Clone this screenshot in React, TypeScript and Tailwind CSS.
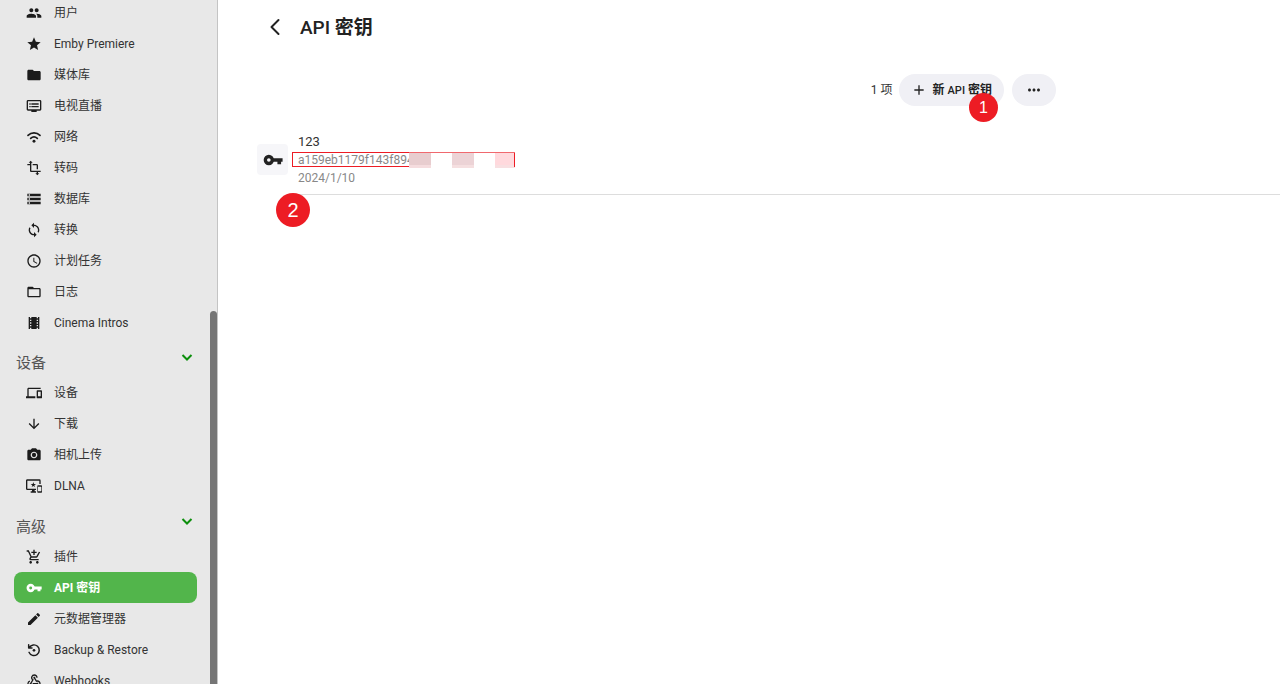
import type { ComponentType } from "react";
import {
  MdAccessTime,
  MdAdd,
  MdAddShoppingCart,
  MdArrowDownward,
  MdDevices,
  MdDvr,
  MdEdit,
  MdFolder,
  MdFolderOpen,
  MdImportantDevices,
  MdMoreHoriz,
  MdPeople,
  MdPhotoCamera,
  MdStar,
  MdStorage,
  MdSync,
  MdTheaters,
  MdTransform,
  MdWebhook,
} from "react-icons/md";

type IconProps = { className?: string };
type NavItem = { icon: ComponentType<IconProps>; label: string };

function WifiIcon({ className }: IconProps) {
  return (
    <svg viewBox="0 0 24 24" className={className} fill="none" stroke="currentColor" strokeWidth="2.6" strokeLinecap="round">
      <path d="M3 9.500c5-4.700 13-4.700 18 0M7 14c3-2.700 7-2.700 10 0" />
      <circle cx="12" cy="18.500" r="2.200" fill="currentColor" stroke="none" />
    </svg>
  );
}

function RestoreIcon({ className }: IconProps) {
  return (
    <svg viewBox="0 0 24 24" className={className} fill="none" stroke="currentColor" strokeWidth="2.2" strokeLinecap="round" strokeLinejoin="round">
      <path d="M4.500 15.500A8 8 0 1 0 5 8.200M4 4v5h5" />
      <circle cx="12" cy="12.500" r="2" fill="currentColor" stroke="none" />
    </svg>
  );
}

function KeyIcon({ className }: IconProps) {
  return (
    <svg viewBox="0 0 24 24" className={className} fill="none" stroke="currentColor">
      <circle cx="7" cy="12" r="4.200" strokeWidth="4" />
      <path d="M12 12h11.500M19.500 12v5" strokeWidth="4.400" />
    </svg>
  );
}

const serverItems: NavItem[] = [
  { icon: MdPeople, label: "用户" },
  { icon: MdStar, label: "Emby Premiere" },
  { icon: MdFolder, label: "媒体库" },
  { icon: MdDvr, label: "电视直播" },
  { icon: WifiIcon, label: "网络" },
  { icon: MdTransform, label: "转码" },
  { icon: MdStorage, label: "数据库" },
  { icon: MdSync, label: "转换" },
  { icon: MdAccessTime, label: "计划任务" },
  { icon: MdFolderOpen, label: "日志" },
  { icon: MdTheaters, label: "Cinema Intros" },
];

const deviceItems: NavItem[] = [
  { icon: MdDevices, label: "设备" },
  { icon: MdArrowDownward, label: "下载" },
  { icon: MdPhotoCamera, label: "相机上传" },
  { icon: MdImportantDevices, label: "DLNA" },
];

const advancedItems: NavItem[] = [
  { icon: MdAddShoppingCart, label: "插件" },
  { icon: KeyIcon, label: "API 密钥" },
  { icon: MdEdit, label: "元数据管理器" },
  { icon: RestoreIcon, label: "Backup & Restore" },
  { icon: MdWebhook, label: "Webhooks" },
];

function NavList({ items, active }: { items: NavItem[]; active?: string }) {
  return (
    <ul>
      {items.map((item) => {
        const isActive = item.label === active;
        return (
          <li key={item.label}>
            <a
              href="#"
              aria-current={isActive ? "page" : undefined}
              className={`flex h-[31px] items-center gap-3 rounded-lg pl-3 text-xs ${
                isActive ? "bg-[#52b54b] font-bold text-white" : "text-[#333]"
              }`}
            >
              <item.icon className={`size-4 shrink-0 ${isActive ? "" : "text-[#1c1c1c]"}`} />
              <span>{item.label}</span>
            </a>
          </li>
        );
      })}
    </ul>
  );
}

function NavSection({ title, items, active }: { title: string; items: NavItem[]; active?: string }) {
  return (
    <section className="pt-1">
      <button type="button" className="flex h-8 w-full items-center justify-between pr-1 pl-[2px]">
        <h2 className="pt-3 text-[15px] leading-5 text-[#555]">{title}</h2>
        <svg viewBox="0 0 12 12" className="size-3 text-[#0c8f0c]" fill="none" stroke="currentColor" strokeWidth="2">
          <path d="M1.500 4 6 8.500 10.500 4" />
        </svg>
      </button>
      <div className="pt-1">
        <NavList items={items} active={active} />
      </div>
    </section>
  );
}

export default function App() {
  return (
    <div className="flex h-screen overflow-hidden bg-white font-[Roboto,'Noto_Sans_CJK_SC',sans-serif] text-[#222]">
      {/* Sidebar */}
      <aside className="flex w-[218px] shrink-0 justify-between border-r border-[#c4c4c4] bg-[#e8e8e8]">
        <nav className="-mt-[3px] ml-[14px] w-[183px]">
          <div className="-mb-px">
            <NavList items={serverItems} />
          </div>
          <NavSection title="设备" items={deviceItems} />
          <NavSection title="高级" items={advancedItems} active="API 密钥" />
        </nav>
        <div className="mt-[311px] w-[7px] rounded-t-full bg-[#757575]" />
      </aside>

      <main className="min-w-0 flex-1">
        {/* Header */}
        <header className="flex h-[54px] items-center gap-4 pl-12">
          <button type="button" aria-label="返回" className="flex size-[18px] items-center justify-center">
            <svg viewBox="0 0 18 18" className="size-[18px]" fill="none" stroke="currentColor" strokeWidth="2" strokeLinecap="round" strokeLinejoin="round">
              <path d="M12.500 2 5.500 9l7 7" />
            </svg>
          </button>
          <h1 className="pt-0.5 text-[19px] font-medium">
            API <span className="font-bold">密钥</span>
          </h1>
        </header>

        {/* Toolbar */}
        <div className="mt-5 flex items-center justify-end pr-56">
          <span className="mr-1.5 text-xs text-[#333]">1 项</span>
          <button type="button" className="relative mr-2 flex h-8 items-center gap-1.5 rounded-full bg-[#f0f0f5] px-3 text-xs font-bold">
            <MdAdd className="size-4" />
            <span>
              新 <span className="text-[11px] font-medium">API</span> 密钥
            </span>
            <span className="absolute top-[19px] right-1.5 flex size-[29px] items-center justify-center rounded-full bg-[#ed1c24] font-['Liberation_Sans',sans-serif] text-base font-normal text-white">
              1
            </span>
          </button>
          <button type="button" aria-label="更多" className="flex h-8 w-11 items-center justify-center rounded-full bg-[#f0f0f5]">
            <MdMoreHoriz className="size-[18px]" />
          </button>
        </div>

        {/* Key list */}
        <div className="relative mt-6 flex items-start pl-[39px]">
          <div className="mt-[14px] flex size-[31px] items-center justify-center rounded bg-[#f6f6f9]">
            <KeyIcon className="size-5" />
          </div>
          <div className="ml-1 flex-1 border-b border-[#ddd] pt-[3px] pb-1.5">
            <p className="mb-px pl-1.5 text-[13px] leading-[18px] text-[#333]">123</p>
            <div className="flex h-4 w-[223px]">
              <p className="h-[15px] w-[117px] border-y border-l border-[#ed1c24] pl-[5px] text-xs leading-[15px] text-[#888]">
                a159eb1179f143f894
              </p>
              {/* Redacted rest of the key */}
              <div className="relative flex flex-1 justify-between border-t border-[#f0686e] bg-white">
                <span className="w-[22px] border-b-3 border-[#f5dcde] bg-[#e8cdcf]" />
                <span className="w-[22px] border-b-3 border-[#f5dfe0] bg-[#ecd3d6]" />
                <span className="w-5 border-b-3 border-[#f8dfe1] bg-[#ffd9dd]" />
                <span className="absolute right-0 h-[14px] w-px bg-[#ed1c24]" />
              </div>
            </div>
            <p className="pl-1.5 text-xs leading-[20px] text-[#888]">2024/1/10</p>
          </div>
          <span className="absolute top-[63px] left-[58px] flex size-[34px] items-center justify-center rounded-full bg-[#ed1c24] font-['Liberation_Sans',sans-serif] text-xl text-white">
            2
          </span>
        </div>
      </main>
    </div>
  );
}
